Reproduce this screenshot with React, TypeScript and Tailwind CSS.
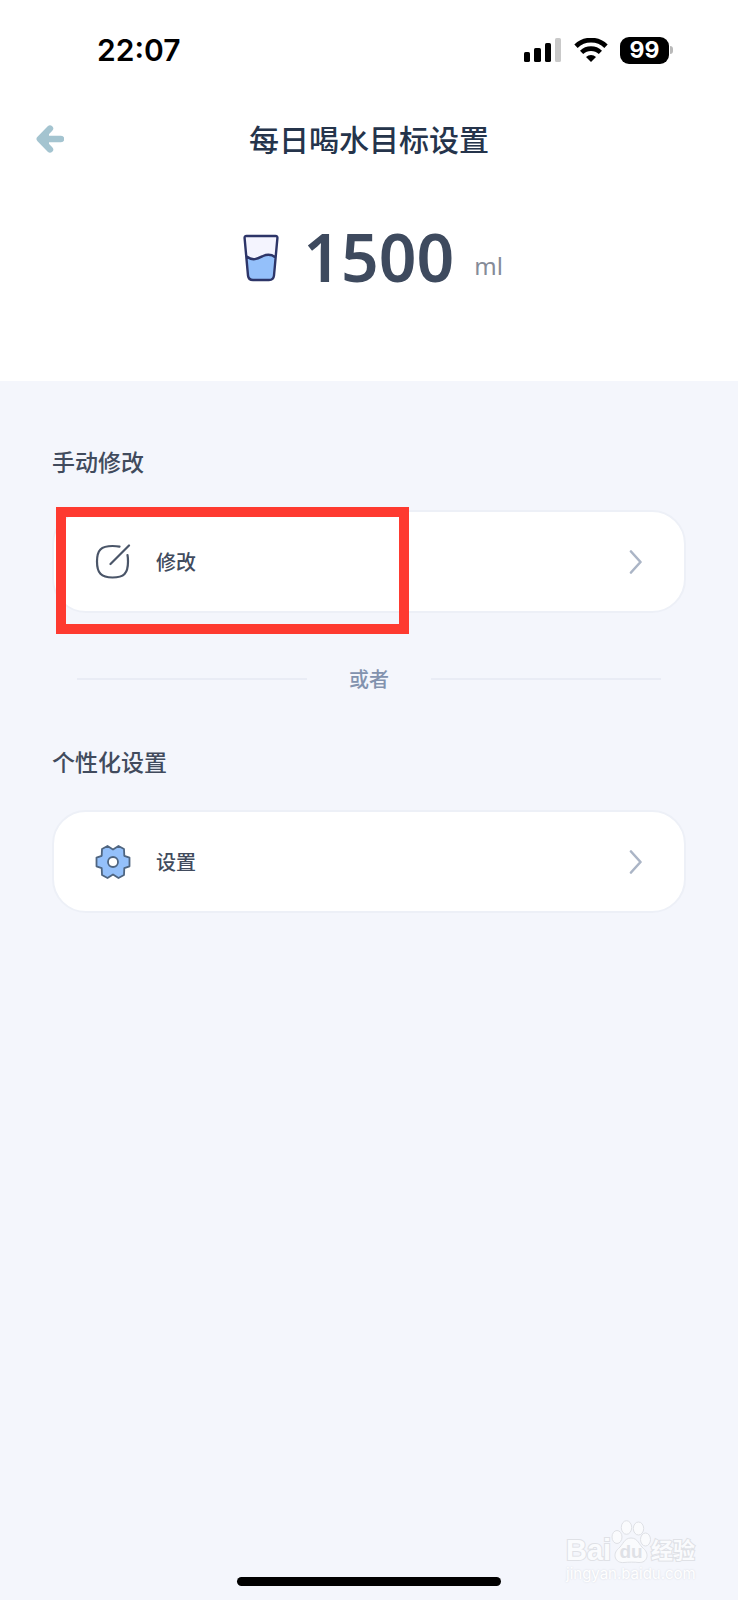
import type { ReactNode } from 'react';

function SignalIcon() {
  return (
    <svg className="w-[38px] h-6" viewBox="0 0 38 24" aria-hidden="true">
      <rect x="0" y="14" width="6" height="10" rx="1.6" fill="#000" />
      <rect x="10" y="10" width="7" height="14" rx="1.6" fill="#000" />
      <rect x="21" y="5" width="6" height="19" rx="1.6" fill="#000" />
      <rect x="31" y="0" width="6" height="24" rx="1.6" fill="#c9c9c9" />
    </svg>
  );
}

function WifiIcon() {
  return (
    <svg className="w-[34px] h-6" viewBox="0 0 34 24" fill="none" aria-hidden="true">
      <path d="M2 8.200a21.500 21.500 0 0 1 30 0" stroke="#000" strokeWidth="4.800" />
      <path d="M7.600 14.400a13.600 13.600 0 0 1 18.800 0" stroke="#000" strokeWidth="4.600" />
      <path d="M17 24l-5-5a7.400 7.400 0 0 1 10 0z" fill="#000" />
    </svg>
  );
}

function StatusBar() {
  return (
    <div className="flex items-center justify-between h-[100px] pl-[97px] pr-[65px]">
      <span className="text-[30px] leading-9 font-semibold text-black">22:07</span>
      <div className="flex items-center">
        <SignalIcon />
        <div className="w-3" />
        <WifiIcon />
        <div className="w-3" />
        <div className="w-[49px] h-[27px] rounded-[9px] bg-black text-white text-[23px] leading-[27px] font-bold text-center">
          99
        </div>
        <div className="ml-px w-[3px] h-2 rounded-r-full bg-[#b9b9b9]" />
      </div>
    </div>
  );
}

function BackIcon() {
  return (
    <svg className="w-7 h-7" viewBox="0 0 28 28" fill="none" aria-hidden="true">
      <path
        d="M14 3.600L3.800 14 14 24.400M4.500 14H25"
        stroke="#a4c4d0"
        strokeWidth="6.400"
        strokeLinecap="round"
        strokeLinejoin="round"
      />
      <path d="M4 14L13 5V23z" fill="#a4c4d0" />
    </svg>
  );
}

function GlassIcon() {
  return (
    <svg className="w-9 h-12" viewBox="0 0 36 48" aria-hidden="true">
      <path d="M3.500 2h29Q34.600 2 34.400 4.200L31 41.500Q30.500 46 26 46H10Q5.500 46 5 41.500L1.600 4.200Q1.400 2 3.500 2z" fill="#f4f4fe" />
      <path d="M3.700 22.500C10 27.500 15 24.500 20 22Q27 19 32.600 23.500L31 41.500Q30.500 46 26 46H10Q5.500 46 5 41.500z" fill="#94c0fa" />
      <path
        d="M3.500 2h29Q34.600 2 34.400 4.200L31 41.500Q30.500 46 26 46H10Q5.500 46 5 41.500L1.600 4.200Q1.400 2 3.500 2zM3.700 22.500C10 27.500 15 24.500 20 22Q27 19 32.600 23.500"
        fill="none"
        stroke="#2d3568"
        strokeWidth="2.400"
        strokeLinejoin="round"
      />
    </svg>
  );
}

function EditIcon() {
  return (
    <svg className="w-9 h-9" viewBox="0 0 36 36" fill="none" aria-hidden="true">
      <path
        d="M24.500 2.600C22 2.100 20 2 17.500 2 6 2 2 6 2 17.500S6 33.500 17.500 33.500 33 29.500 33 17.500C33 15 32.900 13 32.500 11M15.500 20L34 1.500"
        stroke="#4a5568"
        strokeWidth="2.200"
        strokeLinecap="round"
      />
    </svg>
  );
}

function GearIcon() {
  return (
    <svg className="w-9 h-9" viewBox="-18 -18 36 36" aria-hidden="true">
      <path
        d="M-11-13L-5.500-16 0-12.500 5.500-16 11-13 11.300-6.200 16.500-4.300V4.300L11.300 6.200 11 13 5.500 16 0 12.500-5.500 16-11 13-11.300 6.200-16.500 4.300V-4.300L-11.300-6.200z"
        fill="#94c0fa"
        stroke="#4f6580"
        strokeWidth="1.800"
        strokeLinejoin="round"
      />
      <circle r="5" fill="#fff" stroke="#4f6580" strokeWidth="1.800" />
    </svg>
  );
}

function ChevronIcon() {
  return (
    <svg className="w-[14px] h-6" viewBox="0 0 14 24" fill="none" aria-hidden="true">
      <path d="M2 1.500L11.500 12 2 22.500" stroke="#abb5c6" strokeWidth="2.600" strokeLinecap="round" strokeLinejoin="round" />
    </svg>
  );
}

interface OptionRowProps {
  icon: ReactNode;
  label: string;
}

function OptionRow({ icon, label }: OptionRowProps) {
  return (
    <button
      type="button"
      className="flex items-center w-full h-[103px] pl-[41px] pr-[41px] bg-white border-2 border-[#edf0f7] rounded-[34px]"
    >
      {icon}
      <span className="ml-[25px] mr-auto pt-0.5 text-xl leading-7 font-medium text-[#414b5d]">{label}</span>
      <ChevronIcon />
    </button>
  );
}

function Watermark() {
  return (
    <div className="absolute right-10 bottom-4 w-[132px] text-[#fafbfd]" aria-hidden="true">
      <div className="flex items-end h-[46px]">
        <span className="w-[45px] text-[29px] leading-7 font-bold font-['Liberation_Sans',sans-serif] [paint-order:stroke] [-webkit-text-stroke:2px_#dfe1e6]">
          Bai
        </span>
        <div className="relative w-10 h-[44px]">
          <svg className="w-10 h-[44px]" viewBox="0 0 40 44" fill="#fafbfd" stroke="#dfe1e6" strokeWidth="1">
            <ellipse cx="6" cy="17" rx="5" ry="6.500" />
            <ellipse cx="15.500" cy="7.500" rx="5.200" ry="6.800" />
            <ellipse cx="27.500" cy="8.500" rx="5.200" ry="6.500" />
            <ellipse cx="34.500" cy="19.500" rx="5" ry="6.500" />
            <path d="M20 18C27 18 28 25 32.500 28.500C39 34 36 43 28 42.500C23 42 18 42 13 42.500C4 43.500 1 34 7.500 28.500C12 25 13 18 20 18z" />
          </svg>
          <span className="absolute inset-x-0 bottom-0 text-center text-[19px] leading-6 font-bold font-['Liberation_Sans',sans-serif] text-[#dfe1e6]">
            du
          </span>
        </div>
        <span className="text-[22px] leading-7 font-bold whitespace-nowrap [paint-order:stroke] [-webkit-text-stroke:2px_#dfe1e6]">
          经验
        </span>
      </div>
      <p className="text-[15px] leading-5 text-white [text-shadow:0_0_2px_#d4d7de]">jingyan.baidu.com</p>
    </div>
  );
}

export default function App() {
  return (
    <div className="relative flex flex-col min-h-screen bg-[#f4f6fc] font-['Inter','Noto_Sans_CJK_SC',sans-serif]">
      <header className="h-[381px] bg-white">
        <StatusBar />
        <div className="grid grid-cols-[1fr_auto_1fr] items-center h-[78px] px-9">
          <button type="button" aria-label="返回" className="justify-self-start">
            <BackIcon />
          </button>
          <h1 className="pt-0.5 text-[30px] leading-10 font-medium text-[#25344b]">每日喝水目标设置</h1>
        </div>
        <div className="flex items-center justify-center h-40 pl-2 font-['Noto_Sans',sans-serif]">
          <GlassIcon />
          <span className="ml-6 pb-1 text-[66px] leading-none font-semibold text-[#3e4a5e]">1500</span>
          <span className="ml-5 mt-4 text-2xl text-[#858b98]">ml</span>
        </div>
      </header>

      <main className="px-[52px] pt-16">
        <h2 className="text-[23px] leading-9 font-medium text-[#414b5d]">手动修改</h2>
        <div className="relative mt-[29px]">
          <OptionRow icon={<EditIcon />} label="修改" />
          <div className="absolute -top-[3px] left-1 w-[353px] h-[127px] border-10 border-[#fe3a30] pointer-events-none" />
        </div>

        <div className="flex items-center gap-[42px] mt-[51px] px-[25px]">
          <div className="flex-1 h-0.5 bg-[#e9ecf5]" />
          <span className="pt-0.5 text-xl leading-7 font-medium text-[#8292ae]">或者</span>
          <div className="flex-1 h-0.5 bg-[#e9ecf5]" />
        </div>

        <h2 className="mt-[51px] text-[23px] leading-9 font-medium text-[#414b5d]">个性化设置</h2>
        <div className="mt-[29px]">
          <OptionRow icon={<GearIcon />} label="设置" />
        </div>
      </main>

      <div className="mt-auto mx-auto mb-[14px] w-[264px] h-[9px] rounded-full bg-black" />
      <Watermark />
    </div>
  );
}
